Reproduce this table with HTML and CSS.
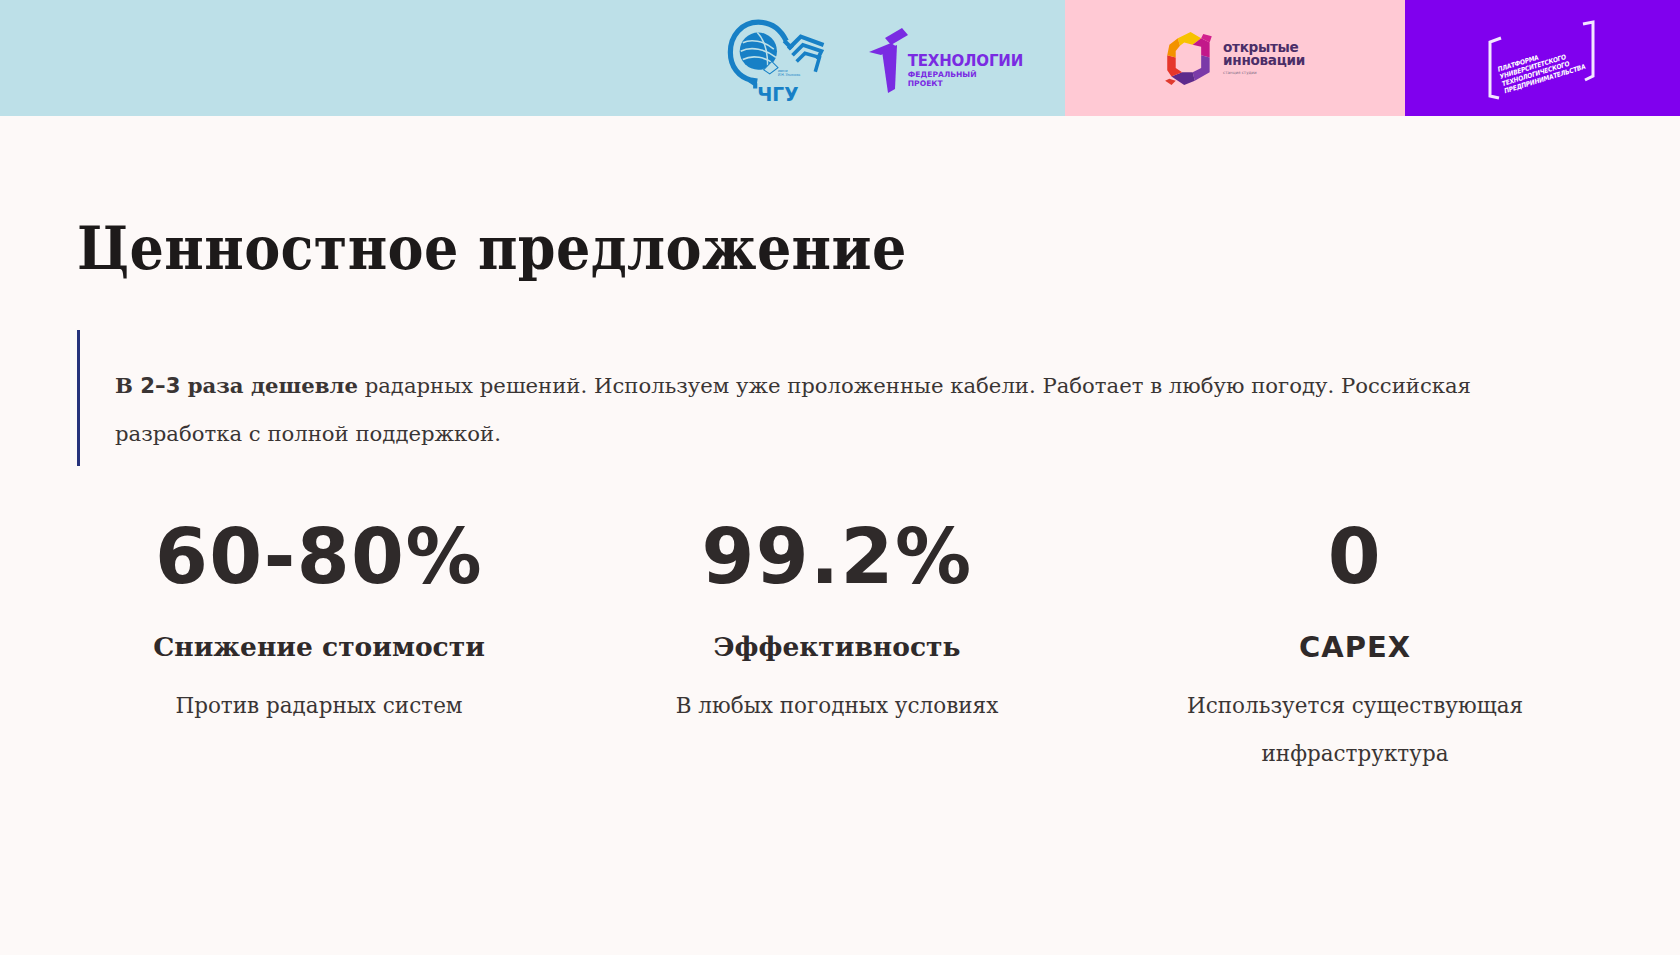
FILE: index.html
```html
<!DOCTYPE html>
<html lang="ru">
<head>
<meta charset="utf-8">
<title>Ценностное предложение</title>
<link rel="stylesheet" href="styles.css">
</head>
<body>
<header class="topbar">
  <div class="seg seg-blue">
    <svg class="logo-chgu" viewBox="0 0 100 84" width="104" height="87" aria-label="ЧГУ">
      <path d="M58 22 C52 10 42 4 31 4 C15 4 4 17 4 33 C4 47 12 57 24 60 L30 61" fill="none" stroke="#1780c6" stroke-width="5"/>
      <path d="M56 22 L62 28 L64 26" fill="none" stroke="#1780c6" stroke-width="4"/>
      <circle cx="31" cy="32" r="18" fill="#1780c6"/>
      <path d="M16 24 C24 20 36 22 46 30" fill="none" stroke="#bde0e8" stroke-width="1.6"/>
      <path d="M14 32 C24 27 38 30 48 38" fill="none" stroke="#bde0e8" stroke-width="1.6"/>
      <path d="M16 40 C26 35 38 38 46 44" fill="none" stroke="#bde0e8" stroke-width="1.6"/>
      <path d="M30 14 C36 20 40 30 40 46" fill="none" stroke="#bde0e8" stroke-width="1.4"/>
      <path d="M36 50 L44 42 L50 48 L42 54 Z" fill="#bde0e8" stroke="#1780c6" stroke-width="1"/>
      <path d="M60 30 L72 18 L94 26" fill="none" stroke="#1780c6" stroke-width="4"/>
      <path d="M64 36 L74 26 L92 32 L88 40" fill="none" stroke="#1780c6" stroke-width="3.6"/>
      <path d="M68 42 L76 34 L90 38 L86 52" fill="none" stroke="#1780c6" stroke-width="3.4"/>
      <text x="50" y="52" font-size="3.2" fill="#1780c6" font-family="Liberation Sans, sans-serif">имени</text>
      <text x="50" y="56" font-size="3.2" fill="#1780c6" font-family="Liberation Sans, sans-serif">И.Н. Ульянова</text>
      <path d="M22 60 L28 64 L28 68" fill="none" stroke="#1780c6" stroke-width="4"/>
      <text x="30" y="80" font-size="18" font-weight="700" fill="#1780c6" font-family="DejaVu Sans, sans-serif">ЧГУ</text>
    </svg>
    <div class="logo-tech">
      <svg viewBox="0 0 40 66" width="42" height="66" aria-hidden="true">
        <polygon points="16,11 33,1 39,8 22,18" fill="#7a2be2"/>
        <polygon points="0,25 22,16 28,20 12,28" fill="#7a2be2"/>
        <polygon points="13,24 28,18 26,62 19,66" fill="#7a2be2"/>
      </svg>
      <div class="tech-text">
        <div class="tech-title">ТЕХНОЛОГИИ</div>
        <div class="tech-sub">ФЕДЕРАЛЬНЫЙ<br>ПРОЕКТ</div>
      </div>
    </div>
  </div>
  <div class="seg seg-pink">
    <div class="logo-oi">
      <svg viewBox="0 0 46 50" width="49" height="53" aria-hidden="true">
        <polygon points="12,6 24,0 34,6 26,12 18,10 14,13" fill="#f7c200"/>
        <polygon points="34,6 42,10 42,24 34,22 34,14 26,12" fill="#c2188a"/>
        <polygon points="42,24 42,38 28,46 26,38 34,34 34,22" fill="#7b3aa8"/>
        <polygon points="28,46 18,50 6,42 16,38 26,38" fill="#5e2a8c"/>
        <polygon points="6,42 2,36 2,22 10,24 10,34 16,38" fill="#e6362b"/>
        <polygon points="2,22 4,12 12,6 14,13 10,18 10,24" fill="#f39200"/>
        <polygon points="36,2 44,4 42,10 34,6" fill="#d2208e"/>
        <polygon points="4,44 10,46 6,50 0,46" fill="#e03a2e"/>
      </svg>
      <div class="oi-text">
        <div class="oi-title">открытые<br>инновации</div>
        <div class="oi-sub">станция студии</div>
      </div>
    </div>
  </div>
  <div class="seg seg-purple">
    <div class="logo-platform">
      <svg viewBox="0 0 115 84" width="115" height="84" aria-hidden="true">
        <path d="M16 22 L5 26 L5 80 L14 82" fill="none" stroke="#f3e6ff" stroke-width="3"/>
        <path d="M98 8 L108 6 L108 60 L100 64" fill="none" stroke="#f3e6ff" stroke-width="3"/>
        <g transform="rotate(-17 56 48)" fill="#ffffff" font-family="DejaVu Sans Condensed, DejaVu Sans, sans-serif" font-weight="700" font-size="6.6" font-style="italic" letter-spacing="-0.2">
          <text x="13" y="43">ПЛАТФОРМА</text>
          <text x="13" y="50.5">УНИВЕРСИТЕТСКОГО</text>
          <text x="13" y="58">ТЕХНОЛОГИЧЕСКОГО</text>
          <text x="13" y="65.5">ПРЕДПРИНИМАТЕЛЬСТВА</text>
        </g>
      </svg>
    </div>
  </div>
</header>

<main class="content">
  <h1 class="title">Ценностное предложение</h1>
  <blockquote class="lead">
    <p><b>В <span class="sans">2–3</span> раза дешевле</b> радарных решений. Используем уже проложенные кабели. Работает в любую погоду. Российская разработка с полной поддержкой.</p>
  </blockquote>
  <section class="stats">
    <div class="stat">
      <div class="stat-num">60-80%</div>
      <div class="stat-label">Снижение стоимости</div>
      <div class="stat-desc">Против радарных систем</div>
    </div>
    <div class="stat">
      <div class="stat-num">99.2%</div>
      <div class="stat-label">Эффективность</div>
      <div class="stat-desc">В любых погодных условиях</div>
    </div>
    <div class="stat">
      <div class="stat-num">0</div>
      <div class="stat-label sans">CAPEX</div>
      <div class="stat-desc">Используется существующая инфраструктура</div>
    </div>
  </section>
</main>
</body>
</html>
```
FILE: styles.css
```css
html, body {
  margin: 0;
  padding: 0;
}
body {
  background: #fdf9f8;
  font-family: "DejaVu Serif", "Liberation Serif", serif;
  color: #2e2a29;
  width: 1680px;
  height: 955px;
  overflow: hidden;
}
.topbar {
  display: flex;
  height: 116px;
}
.seg {
  display: flex;
  align-items: center;
}
.seg-blue {
  width: 1065px;
  background: #bde0e8;
  justify-content: flex-end;
  padding-right: 42px;
  box-sizing: border-box;
  gap: 38px;
}
.logo-chgu {
  display: block;
  margin-top: 6px;
}
.seg-pink {
  width: 340px;
  background: #ffc9d4;
  justify-content: center;
}
.seg-purple {
  flex: 1;
  background: #8000ee;
  justify-content: center;
}
.logo-tech {
  display: flex;
  align-items: flex-start;
  margin-top: 4px;
}
.logo-tech svg {
  display: block;
}
.tech-text {
  font-family: "DejaVu Sans", sans-serif;
  color: #7a2be2;
  font-weight: 700;
  margin-top: 26px;
  margin-left: -2px;
}
.tech-title {
  font-size: 15px;
  letter-spacing: -0.2px;
  line-height: 16px;
}
.tech-sub {
  font-size: 7.6px;
  line-height: 8.5px;
  margin-top: 2px;
}
.logo-oi {
  display: flex;
  align-items: center;
  gap: 9px;
}
.oi-text {
  font-family: "DejaVu Sans", sans-serif;
  color: #4b2e68;
}
.oi-title {
  font-weight: 700;
  font-size: 13.6px;
  line-height: 12.5px;
  letter-spacing: -0.3px;
}
.oi-sub {
  font-size: 4px;
  margin-top: 4px;
  color: #7a6a82;
}
.logo-platform svg {
  display: block;
}

.content {
  padding: 0 83px 0 77px;
}
.title {
  margin: 0;
  padding-top: 96px;
  font-family: "DejaVu Serif Condensed", "DejaVu Serif", serif;
  font-size: 60px;
  line-height: 1.2;
  font-weight: 700;
  color: #1d1a1a;
  letter-spacing: 0.4px;
}
.lead {
  margin: 46px 0 0 0;
  border-left: 3px solid #26327a;
  padding: 32px 0 8px 35px;
}
.lead p {
  margin: 0;
  max-width: 1420px;
  font-size: 21.2px;
  line-height: 48px;
  color: #3a3534;
}
.lead b {
  font-weight: 700;
}
.sans {
  font-family: "DejaVu Sans", sans-serif;
}
.stats {
  display: grid;
  grid-template-columns: repeat(3, 1fr);
  column-gap: 34px;
  margin-top: 45px;
  text-align: center;
}
.stat-num {
  font-family: "DejaVu Sans", sans-serif;
  font-weight: 700;
  font-size: 76px;
  line-height: 1.2;
  color: #2f2a2a;
  letter-spacing: 1.5px;
}
.stat-label {
  font-size: 26.5px;
  font-weight: 700;
  line-height: 34px;
  margin-top: 28px;
  color: #2f2a2a;
}
.stat-label.sans {
  font-size: 29px;
  letter-spacing: 1px;
}
.stat-desc {
  font-size: 21.5px;
  line-height: 48px;
  margin-top: 18px;
  padding: 0 70px;
  color: #3a3534;
}
```
